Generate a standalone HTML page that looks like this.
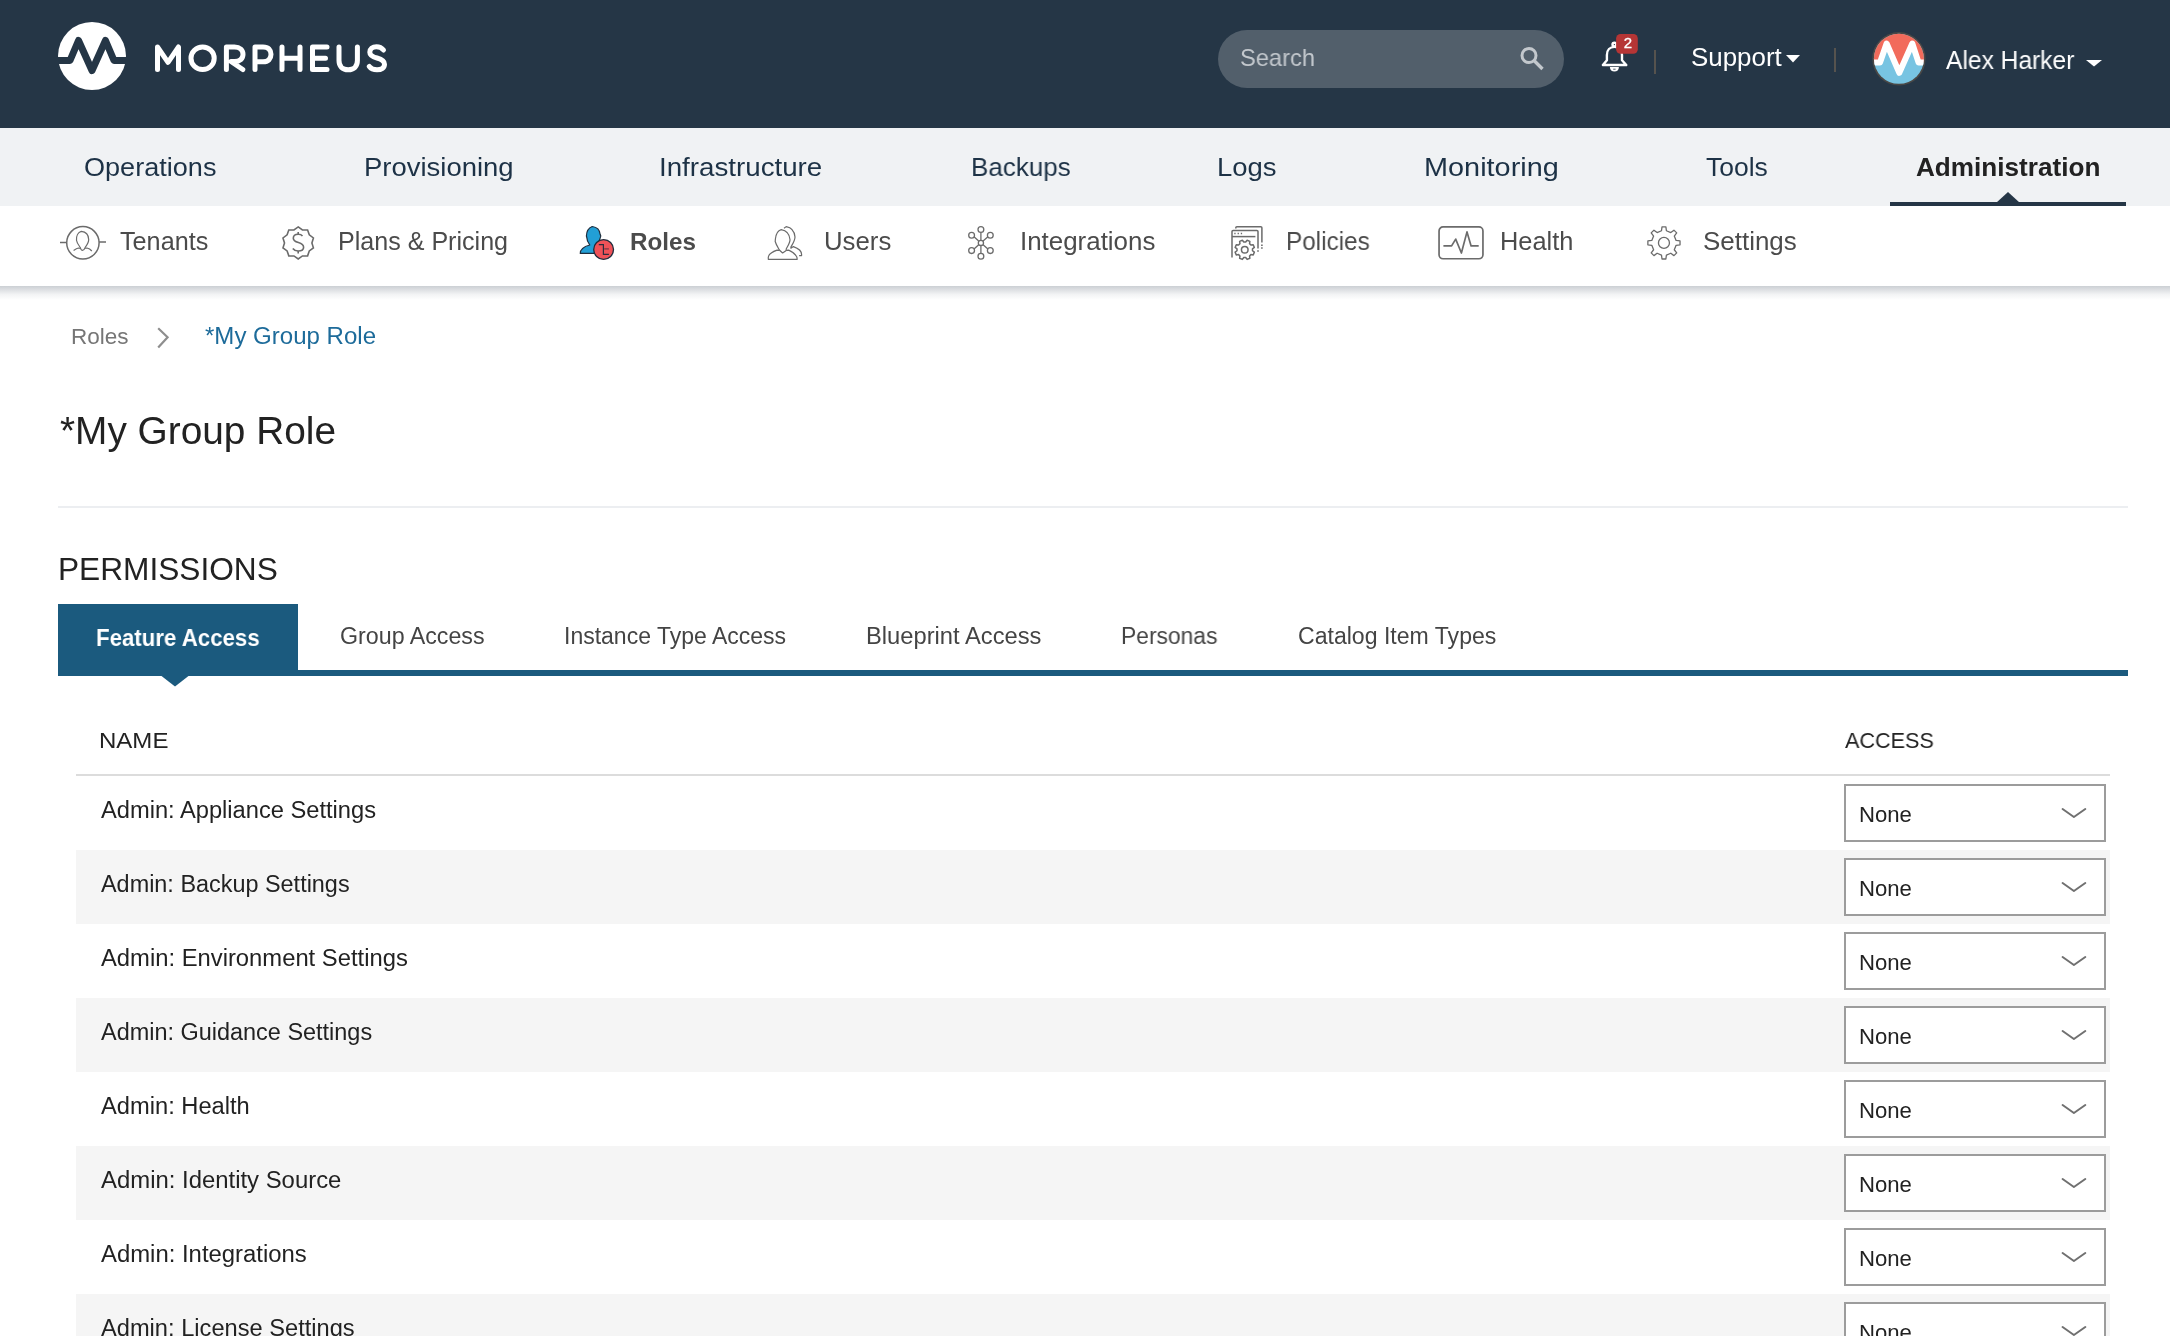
<!DOCTYPE html>
<html><head><meta charset="utf-8"><title>Morpheus - Roles</title>
<style>
html,body{margin:0;padding:0;width:2170px;height:1336px;overflow:hidden;background:#fff;}
body{position:relative;font-family:"Liberation Sans",sans-serif;}
.t{position:absolute;white-space:nowrap;line-height:1;will-change:transform;}
.a{position:absolute;display:block;}
</style></head><body>
<div style="position:absolute;left:0;top:0;width:2170px;height:128px;background:#253646"></div>
<svg class="a" style="left:0;top:0" width="400" height="128" viewBox="0 0 400 128">
<circle cx="92" cy="56" r="34" fill="#fff"/>
<path d="M54 60.5 H70 L78.5 40.5 L92 70.5 L105.5 40.5 L114 60.5 H130" fill="none" stroke="#253646" stroke-width="7" stroke-linejoin="round" stroke-linecap="butt"/>
<g fill="none" stroke="#fff" stroke-width="5" stroke-linecap="round" stroke-linejoin="round">
<path d="M157.5 69.5 V47 L168 62.3 L178.5 47 V69.5"/>
<ellipse cx="202.6" cy="58.2" rx="11.6" ry="11.3"/>
<path d="M226.4 69.5 V47 H234.5 C240 47 243 50 243 54.3 C243 58.6 240 61.5 234.5 61.5 H231 L242.8 69.5"/>
<path d="M255 69.5 V47 H263 C268.5 47 271 50 271 54.3 C271 58.6 268.5 61.8 263 61.8 H255"/>
<path d="M282 47 V69.5 M300 47 V69.5 M282 58.2 H300"/>
<path d="M327 47 H312.5 V69.5 H327 M312.5 58.2 H325.5"/>
<path d="M339 47 V60.5 C339 66.5 342.5 69.8 348.2 69.8 C353.9 69.8 357.4 66.5 357.4 60.5 V47"/>
<path d="M383.5 50 C381.5 47.5 379 46.7 376.5 46.7 C372.5 46.7 369.8 49 369.8 52.2 C369.8 55.5 372.5 56.8 377 58 C381.8 59.3 384.5 60.8 384.5 64.3 C384.5 67.8 381.5 69.8 377 69.8 C373.5 69.8 370.8 68.5 369.3 66.5"/>
</g>
</svg>
<div class="a" style="left:1218px;top:30px;width:346px;height:58px;border-radius:29px;background:#525f6b"></div>
<div class="t" style="left:1239.51px;top:46.00px;font-size:24px;color:#c3c8cd;transform:scaleX(0.9865);transform-origin:0 0;">Search</div>
<svg class="a" style="left:1510px;top:40px" width="40" height="40" viewBox="0 0 40 40">
<circle cx="19" cy="15.5" r="7" fill="none" stroke="#c3c8cd" stroke-width="3"/>
<path d="M24 20.5 L32.5 29" stroke="#c3c8cd" stroke-width="3.4" stroke-linecap="butt"/>
</svg>
<svg class="a" style="left:1596px;top:30px" width="48" height="46" viewBox="0 0 48 46">
<g fill="none" stroke="#fff" stroke-width="2.4" stroke-linejoin="round">
<circle cx="18.4" cy="14.6" r="1.9"/>
<path d="M10.9 30.2 V25 C10.9 20 14 16.9 18.4 16.9 C22.8 16.9 26 20 26 25 V30.2 L30.3 35 H6.9 Z"/>

</g>
<path d="M13.9 37 H22.9 C22.9 40 21 41.6 18.4 41.6 C15.8 41.6 13.9 40 13.9 37 Z" fill="#fff"/><path d="M17.2 39.2 H19.6" stroke="#253646" stroke-width="0.8"/>
<rect x="20.1" y="4" width="21.7" height="19.8" rx="4.5" fill="#b53535"/>
</svg>
<div class="t" style="left:1616.5px;top:34.5px;width:22px;text-align:center;font-size:15px;line-height:15px;color:#fff;-webkit-text-stroke:0.3px #fff">2</div>
<div class="a" style="left:1654px;top:50px;width:2px;height:24px;background:#56534e"></div>
<div class="a" style="left:1834px;top:48px;width:2px;height:24px;background:#56534e"></div>
<div class="t" style="left:1691.07px;top:45.00px;font-size:25.5px;color:#fff;transform:scaleX(1.0161);transform-origin:0 0;">Support</div>
<svg class="a" style="left:1784px;top:53px" width="18" height="12"><path d="M2 2 H16 L9 9.5 Z" fill="#fff"/></svg>
<svg class="a" style="left:1868px;top:28px" width="62" height="62" viewBox="0 0 62 62">
<defs><clipPath id="av"><circle cx="30.9" cy="30.8" r="25.0"/></clipPath></defs>
<circle cx="30.9" cy="30.8" r="26.7" fill="#4a4846"/>
<g clip-path="url(#av)">
<rect x="0" y="0" width="62" height="62" fill="#78c4e2"/>
<path d="M0 34.6 H12 L18.6 15.5 L31.3 44.8 L44.3 15.5 L50.6 34.6 H62 V0 H0 Z" fill="#f26b5b"/>
<path d="M0 34.6 H12 L18.6 15.5 L31.3 44.8 L44.3 15.5 L50.6 34.6 H62" fill="none" stroke="#fff" stroke-width="6" stroke-linejoin="round"/>
</g>
</svg>
<div class="t" style="left:1946.20px;top:47.50px;font-size:25px;color:#fff;transform:scaleX(0.9831);transform-origin:0 0;">Alex Harker</div>
<svg class="a" style="left:2084px;top:58px" width="20" height="12"><path d="M2 2 H18 L10 8.5 Z" fill="#fff"/></svg>
<div class="a" style="left:0;top:128px;width:2170px;height:78px;background:#f0f2f4"></div>
<div class="t" style="left:83.88px;top:153.80px;font-size:26.5px;color:#1d3246;transform:scaleX(1.0219);transform-origin:0 0;">Operations</div>
<div class="t" style="left:364.33px;top:153.80px;font-size:26.5px;color:#1d3246;transform:scaleX(1.0364);transform-origin:0 0;">Provisioning</div>
<div class="t" style="left:659.41px;top:153.80px;font-size:26.5px;color:#1d3246;transform:scaleX(1.0458);transform-origin:0 0;">Infrastructure</div>
<div class="t" style="left:970.54px;top:153.80px;font-size:26.5px;color:#1d3246;transform:scaleX(0.9798);transform-origin:0 0;">Backups</div>
<div class="t" style="left:1217.43px;top:153.80px;font-size:26.5px;color:#1d3246;transform:scaleX(1.0370);transform-origin:0 0;">Logs</div>
<div class="t" style="left:1424.02px;top:153.80px;font-size:26.5px;color:#1d3246;transform:scaleX(1.0892);transform-origin:0 0;">Monitoring</div>
<div class="t" style="left:1705.50px;top:153.80px;font-size:26.5px;color:#1d3246;transform:scaleX(1.0000);transform-origin:0 0;">Tools</div>
<div class="t" style="left:1916.10px;top:153.80px;font-size:26px;color:#222;transform:scaleX(1.0050);transform-origin:0 0;font-weight:bold;">Administration</div>
<div class="a" style="left:1890px;top:202px;width:236px;height:4px;background:#253646"></div>
<svg class="a" style="left:1994px;top:190px" width="28" height="14"><path d="M2 13 L14 2 L26 13 Z" fill="#253646"/></svg>
<div class="a" style="left:0;top:286px;width:2170px;height:14px;background:linear-gradient(rgba(40,55,75,0.24),rgba(40,55,75,0.06) 60%,rgba(40,55,75,0))"></div>
<div class="t" style="left:119.79px;top:229.00px;font-size:25px;color:#4b4b4b;transform:scaleX(1.0082);transform-origin:0 0;">Tenants</div>
<div class="t" style="left:337.79px;top:229.00px;font-size:25px;color:#4b4b4b;transform:scaleX(1.0030);transform-origin:0 0;">Plans &amp; Pricing</div>
<div class="t" style="left:629.88px;top:230.00px;font-size:24px;color:#4b4b4b;transform:scaleX(1.0097);transform-origin:0 0;font-weight:bold;">Roles</div>
<div class="t" style="left:824.24px;top:229.00px;font-size:25px;color:#4b4b4b;transform:scaleX(1.0306);transform-origin:0 0;">Users</div>
<div class="t" style="left:1020.43px;top:229.00px;font-size:25px;color:#4b4b4b;transform:scaleX(1.0359);transform-origin:0 0;">Integrations</div>
<div class="t" style="left:1286.26px;top:229.00px;font-size:25px;color:#4b4b4b;transform:scaleX(0.9711);transform-origin:0 0;">Policies</div>
<div class="t" style="left:1499.97px;top:229.00px;font-size:25px;color:#4b4b4b;transform:scaleX(1.0145);transform-origin:0 0;">Health</div>
<div class="t" style="left:1702.82px;top:229.00px;font-size:25px;color:#4b4b4b;transform:scaleX(1.0379);transform-origin:0 0;">Settings</div>
<svg class="a" style="left:56px;top:222px" width="54" height="42" viewBox="0 0 54 42">
<g fill="none" stroke="#6b6b6b" stroke-width="1.5">
<circle cx="26.9" cy="20.8" r="16.2"/>
<path d="M4 20.5 H10.7 M43.1 20.1 H50"/>
</g>
<g fill="none" stroke="#6b6b6b" stroke-width="1.2" stroke-linejoin="round">
<path d="M24.2 25.4 C22.6 23.2 20.8 21 20.5 18.3 C20.2 14 22 10.2 25.3 9.4 C29.8 9.8 32.5 12.5 32.7 17.5 C32.8 20.6 31 23 29.2 25.4 C28.2 27.8 27.5 28.4 26.5 28.4 C25.5 28.4 24.8 27.6 24.2 25.4 Z"/>
<path d="M17.6 28.5 C19.5 27.2 21 26.3 22.5 26 L24.5 26.4 M29.2 26.4 L31 26 C33 26.4 34.5 27.4 35.8 29"/>
</g>
</svg>
<svg class="a" style="left:276px;top:222px" width="44" height="42" viewBox="0 0 44 42">
<polygon points="22.20,4.90 26.43,7.87 31.60,7.96 33.28,12.85 37.42,15.96 35.90,20.90 37.42,25.84 33.28,28.95 31.60,33.84 26.43,33.93 22.20,36.90 17.97,33.93 12.80,33.84 11.12,28.95 6.98,25.84 8.50,20.90 6.98,15.96 11.12,12.85 12.80,7.96 17.97,7.87" fill="none" stroke="#6b6b6b" stroke-width="1.6" stroke-linejoin="miter"/>
<g fill="none" stroke="#6b6b6b" stroke-width="1.6">
<path d="M26.5 14 C25.5 12.8 24 12.3 22.2 12.3 C19.2 12.3 17.3 14 17.3 16.3 C17.3 19 19.6 19.8 22.4 20.6 C25.4 21.5 27.6 22.6 27.6 25.2 C27.6 27.7 25.3 29 22.2 29 C19.9 29 18 28 16.8 26.4"/>
<path d="M22.2 9.9 V12.3 M22.2 29 V31.6"/>
</g>
</svg>
<svg class="a" style="left:574px;top:222px" width="44" height="42" viewBox="0 0 44 42">
<path d="M6.3 31.4 C6.3 27.5 10 24.5 15.8 23 C14.3 21 12.8 18.5 12.8 15.5 L12.4 14 C12.6 9 14.8 5.8 18.2 4.5 C22.5 5 25.8 8 26.2 12.5 L26.8 14 C26 18 24.5 20.5 23 23 L24 31.4 Z" fill="#229fd6" stroke="#1f2d3d" stroke-width="1.2" stroke-linejoin="round"/>
<circle cx="29.6" cy="27.5" r="9.9" fill="#ef5258" stroke="#1f2d3d" stroke-width="1.3"/>
<path d="M24.8 22.6 H29.4 V32.4 H34.9" fill="none" stroke="#2b2d3d" stroke-width="1.2"/>
<path d="M30.2 26.9 H34.9" fill="none" stroke="#7a3a45" stroke-width="1.3"/>
</svg>
<svg class="a" style="left:762px;top:222px" width="44" height="42" viewBox="0 0 44 42">
<g fill="none" stroke="#6b6b6b" stroke-width="1.2" stroke-linejoin="round">
<path d="M17.6 28.3 C16 25.5 14 22.5 13.2 19.5 L13.4 17 C14 11.5 16 8.5 19.2 7.6 C24.5 8.5 27.5 12 28 17.5 C28.2 20.5 26 23.5 24.2 27 L24.2 28.4 L20.6 31 Z"/>
<path d="M17.6 28.3 L15.1 28.1 C11 29.5 7 31.5 6.3 35 L6.3 37.3 H35.2 C35 33 31 30 26.7 28.1 L24.2 28.4"/>
<path d="M22 6.3 L24.2 4.6 C29.5 5.5 32.5 9 33 15 C33 18.5 31 21.5 28.9 25 L28.9 26.2 L31.4 24.6 C35.5 26 39.6 28.5 39.6 32.5 V33.6 H37.1"/>
</g>
</svg>
<svg class="a" style="left:960px;top:222px" width="44" height="42" viewBox="0 0 44 42">
<g fill="none" stroke="#6b6b6b" stroke-width="1.3">
<circle cx="20.9" cy="20.9" r="2.6"/>
<circle cx="20.9" cy="7.5" r="2.9"/>
<circle cx="20.9" cy="34.3" r="2.9"/>
<circle cx="11.6" cy="13.2" r="2.9"/>
<circle cx="30.3" cy="13.2" r="2.9"/>
<circle cx="11.6" cy="28.6" r="2.9"/>
<circle cx="30.3" cy="28.6" r="2.9"/>
<path d="M20.9 10.4 V18.3 M20.9 23.5 V31.4 M14 14.8 L18.7 19.1 M27.9 14.8 L23.1 19.1 M14 27 L18.7 22.7 M27.9 27 L23.1 22.7"/>
</g>
</svg>
<svg class="a" style="left:1224px;top:222px" width="44" height="42" viewBox="0 0 44 42">
<g fill="none" stroke="#6b6b6b" stroke-width="1.5">
<path d="M11.8 6.6 V5.8 Q11.8 4.7 12.9 4.7 H36.8 Q37.9 4.7 37.9 5.8 V20.4"/>
<path d="M8 35.5 V9.6 Q8 8.5 9.1 8.5 H32.9 Q34 8.5 34 9.6 V26.4"/>
<path d="M8 14.6 H31.4"/>
<path d="M37.9 22.4 V24 M37.9 25.2 V26.8 M34 28.2 V29.8" stroke-width="1.6"/>
<path d="M10.3 11.5 H11.6 M13.6 11.5 H14.9 M16.8 11.5 H18.1" stroke-width="1.4"/>
<polygon points="21.70,20.06 23.13,18.19 25.86,19.32 25.55,21.65 26.90,23.00 29.23,22.69 30.36,25.42 28.49,26.85 28.49,28.75 30.36,30.18 29.23,32.91 26.90,32.60 25.55,33.95 25.86,36.28 23.13,37.41 21.70,35.54 19.80,35.54 18.37,37.41 15.64,36.28 15.95,33.95 14.60,32.60 12.27,32.91 11.14,30.18 13.01,28.75 13.01,26.85 11.14,25.42 12.27,22.69 14.60,23.00 15.95,21.65 15.64,19.32 18.37,18.19 19.80,20.06" stroke-linejoin="round"/>
<circle cx="20.75" cy="27.8" r="3.3"/>
</g>
</svg>
<svg class="a" style="left:1434px;top:222px" width="54" height="42" viewBox="0 0 54 42">
<g fill="none" stroke="#6b6b6b" stroke-width="1.7" stroke-linejoin="miter">
<rect x="5.05" y="4.95" width="43.9" height="31.8" rx="4"/>
<path d="M9.4 23.9 H17.6 L21.7 17.1 L27.4 31 L33 9.9 L37.1 23.9 H44.7" stroke-linejoin="round"/>
</g>
</svg>
<svg class="a" style="left:1641px;top:222px" width="44" height="42" viewBox="0 0 44 42">
<g fill="none" stroke="#6b6b6b" stroke-width="1.3" stroke-linejoin="round">
<path d="M20.49 8.75 L21.01 4.82 L24.89 4.82 L25.41 8.75 L29.80 10.56 L32.95 8.16 L35.69 10.90 L33.29 14.05 L35.10 18.44 L39.03 18.96 L39.03 22.84 L35.10 23.36 L33.29 27.75 L35.69 30.90 L32.95 33.64 L29.80 31.24 L25.41 33.05 L24.89 36.98 L21.01 36.98 L20.49 33.05 L16.10 31.24 L12.95 33.64 L10.21 30.90 L12.61 27.75 L10.80 23.36 L6.87 22.84 L6.87 18.96 L10.80 18.44 L12.61 14.05 L10.21 10.90 L12.95 8.16 L16.10 10.56 Z"/>
<circle cx="22.95" cy="20.9" r="5.5"/>
</g>
</svg>
<div class="t" style="left:70.80px;top:325.90px;font-size:22.5px;color:#767676;transform:scaleX(0.9982);transform-origin:0 0;">Roles</div>
<svg class="a" style="left:150px;top:320px" width="26" height="36"><path d="M8.2 8.2 L17.6 17.3 L8.2 27.6" fill="none" stroke="#8e8e8e" stroke-width="2.2"/></svg>
<div class="t" style="left:205.48px;top:324.90px;font-size:23.5px;color:#1d6b9a;transform:scaleX(1.0230);transform-origin:0 0;">*My Group Role</div>
<div class="t" style="left:59.89px;top:412.00px;font-size:38.5px;color:#222;transform:scaleX(1.0077);transform-origin:0 0;">*My Group Role</div>
<div class="a" style="left:58px;top:506px;width:2070px;height:2px;background:#eceef1"></div>
<div class="t" style="left:58.49px;top:553.50px;font-size:31.5px;color:#222;transform:scaleX(1.0047);transform-origin:0 0;">PERMISSIONS</div>
<div class="a" style="left:58px;top:604px;width:240px;height:72px;background:#1b5a7e"></div>
<div class="a" style="left:58px;top:670px;width:2070px;height:6px;background:#1b5a7e"></div>
<svg class="a" style="left:160px;top:675px" width="30" height="13"><path d="M1.5 1 L15 11.5 L28.5 1 Z" fill="#1b5a7e"/></svg>
<div class="t" style="left:96.05px;top:626.00px;font-size:24px;color:#fff;transform:scaleX(0.9270);transform-origin:0 0;font-weight:bold;">Feature Access</div>
<div class="t" style="left:340.49px;top:625.10px;font-size:23px;color:#444;transform:scaleX(1.0099);transform-origin:0 0;">Group Access</div>
<div class="t" style="left:564.00px;top:625.10px;font-size:23px;color:#444;transform:scaleX(1.0000);transform-origin:0 0;">Instance Type Access</div>
<div class="t" style="left:865.74px;top:625.10px;font-size:23px;color:#444;transform:scaleX(1.0317);transform-origin:0 0;">Blueprint Access</div>
<div class="t" style="left:1120.91px;top:625.10px;font-size:23px;color:#444;transform:scaleX(0.9926);transform-origin:0 0;">Personas</div>
<div class="t" style="left:1297.90px;top:625.10px;font-size:23px;color:#444;transform:scaleX(1.0031);transform-origin:0 0;">Catalog Item Types</div>
<div class="t" style="left:98.96px;top:730.00px;font-size:22.5px;color:#222;transform:scaleX(1.0677);transform-origin:0 0;">NAME</div>
<div class="t" style="left:1844.90px;top:730.00px;font-size:22.5px;color:#222;transform:scaleX(0.9604);transform-origin:0 0;">ACCESS</div>
<div class="a" style="left:76px;top:774px;width:2034px;height:2px;background:#dcdcdc"></div>
<div class="t" style="left:100.50px;top:799.20px;font-size:23.1px;color:#222;transform:scaleX(1.0251);transform-origin:0 0;">Admin: Appliance Settings</div>
<div class="a" style="left:1844px;top:784px;width:262px;height:58px;box-sizing:border-box;border:2px solid #9c9c9c;background:#fff"></div>
<div class="t" style="left:1859.44px;top:805.30px;font-size:21.5px;color:#222;transform:scaleX(1.0292);transform-origin:0 0;">None</div>
<svg class="a" style="left:2060px;top:806px" width="28" height="14"><path d="M2.6 3 L13.9 11 L25.3 3" fill="none" stroke="#707070" stroke-width="2" stroke-linecap="round" stroke-linejoin="round"/></svg>
<div class="a" style="left:76px;top:850px;width:2034px;height:74px;background:#f5f5f5"></div>
<div class="t" style="left:100.50px;top:873.20px;font-size:23.1px;color:#222;transform:scaleX(1.0139);transform-origin:0 0;">Admin: Backup Settings</div>
<div class="a" style="left:1844px;top:858px;width:262px;height:58px;box-sizing:border-box;border:2px solid #9c9c9c;background:#fff"></div>
<div class="t" style="left:1859.44px;top:879.30px;font-size:21.5px;color:#222;transform:scaleX(1.0292);transform-origin:0 0;">None</div>
<svg class="a" style="left:2060px;top:880px" width="28" height="14"><path d="M2.6 3 L13.9 11 L25.3 3" fill="none" stroke="#707070" stroke-width="2" stroke-linecap="round" stroke-linejoin="round"/></svg>
<div class="t" style="left:100.50px;top:947.20px;font-size:23.1px;color:#222;transform:scaleX(1.0303);transform-origin:0 0;">Admin: Environment Settings</div>
<div class="a" style="left:1844px;top:932px;width:262px;height:58px;box-sizing:border-box;border:2px solid #9c9c9c;background:#fff"></div>
<div class="t" style="left:1859.44px;top:953.30px;font-size:21.5px;color:#222;transform:scaleX(1.0292);transform-origin:0 0;">None</div>
<svg class="a" style="left:2060px;top:954px" width="28" height="14"><path d="M2.6 3 L13.9 11 L25.3 3" fill="none" stroke="#707070" stroke-width="2" stroke-linecap="round" stroke-linejoin="round"/></svg>
<div class="a" style="left:76px;top:998px;width:2034px;height:74px;background:#f5f5f5"></div>
<div class="t" style="left:100.50px;top:1021.20px;font-size:23.1px;color:#222;transform:scaleX(1.0154);transform-origin:0 0;">Admin: Guidance Settings</div>
<div class="a" style="left:1844px;top:1006px;width:262px;height:58px;box-sizing:border-box;border:2px solid #9c9c9c;background:#fff"></div>
<div class="t" style="left:1859.44px;top:1027.30px;font-size:21.5px;color:#222;transform:scaleX(1.0292);transform-origin:0 0;">None</div>
<svg class="a" style="left:2060px;top:1028px" width="28" height="14"><path d="M2.6 3 L13.9 11 L25.3 3" fill="none" stroke="#707070" stroke-width="2" stroke-linecap="round" stroke-linejoin="round"/></svg>
<div class="t" style="left:100.50px;top:1095.20px;font-size:23.1px;color:#222;transform:scaleX(1.0257);transform-origin:0 0;">Admin: Health</div>
<div class="a" style="left:1844px;top:1080px;width:262px;height:58px;box-sizing:border-box;border:2px solid #9c9c9c;background:#fff"></div>
<div class="t" style="left:1859.44px;top:1101.30px;font-size:21.5px;color:#222;transform:scaleX(1.0292);transform-origin:0 0;">None</div>
<svg class="a" style="left:2060px;top:1102px" width="28" height="14"><path d="M2.6 3 L13.9 11 L25.3 3" fill="none" stroke="#707070" stroke-width="2" stroke-linecap="round" stroke-linejoin="round"/></svg>
<div class="a" style="left:76px;top:1146px;width:2034px;height:74px;background:#f5f5f5"></div>
<div class="t" style="left:100.50px;top:1169.20px;font-size:23.1px;color:#222;transform:scaleX(1.0346);transform-origin:0 0;">Admin: Identity Source</div>
<div class="a" style="left:1844px;top:1154px;width:262px;height:58px;box-sizing:border-box;border:2px solid #9c9c9c;background:#fff"></div>
<div class="t" style="left:1859.44px;top:1175.30px;font-size:21.5px;color:#222;transform:scaleX(1.0292);transform-origin:0 0;">None</div>
<svg class="a" style="left:2060px;top:1176px" width="28" height="14"><path d="M2.6 3 L13.9 11 L25.3 3" fill="none" stroke="#707070" stroke-width="2" stroke-linecap="round" stroke-linejoin="round"/></svg>
<div class="t" style="left:100.50px;top:1243.20px;font-size:23.1px;color:#222;transform:scaleX(1.0343);transform-origin:0 0;">Admin: Integrations</div>
<div class="a" style="left:1844px;top:1228px;width:262px;height:58px;box-sizing:border-box;border:2px solid #9c9c9c;background:#fff"></div>
<div class="t" style="left:1859.44px;top:1249.30px;font-size:21.5px;color:#222;transform:scaleX(1.0292);transform-origin:0 0;">None</div>
<svg class="a" style="left:2060px;top:1250px" width="28" height="14"><path d="M2.6 3 L13.9 11 L25.3 3" fill="none" stroke="#707070" stroke-width="2" stroke-linecap="round" stroke-linejoin="round"/></svg>
<div class="a" style="left:76px;top:1294px;width:2034px;height:74px;background:#f5f5f5"></div>
<div class="t" style="left:100.50px;top:1317.20px;font-size:23.1px;color:#222;transform:scaleX(1.0239);transform-origin:0 0;">Admin: License Settings</div>
<div class="a" style="left:1844px;top:1302px;width:262px;height:58px;box-sizing:border-box;border:2px solid #9c9c9c;background:#fff"></div>
<div class="t" style="left:1859.44px;top:1323.30px;font-size:21.5px;color:#222;transform:scaleX(1.0292);transform-origin:0 0;">None</div>
<svg class="a" style="left:2060px;top:1324px" width="28" height="14"><path d="M2.6 3 L13.9 11 L25.3 3" fill="none" stroke="#707070" stroke-width="2" stroke-linecap="round" stroke-linejoin="round"/></svg>
</body></html>
